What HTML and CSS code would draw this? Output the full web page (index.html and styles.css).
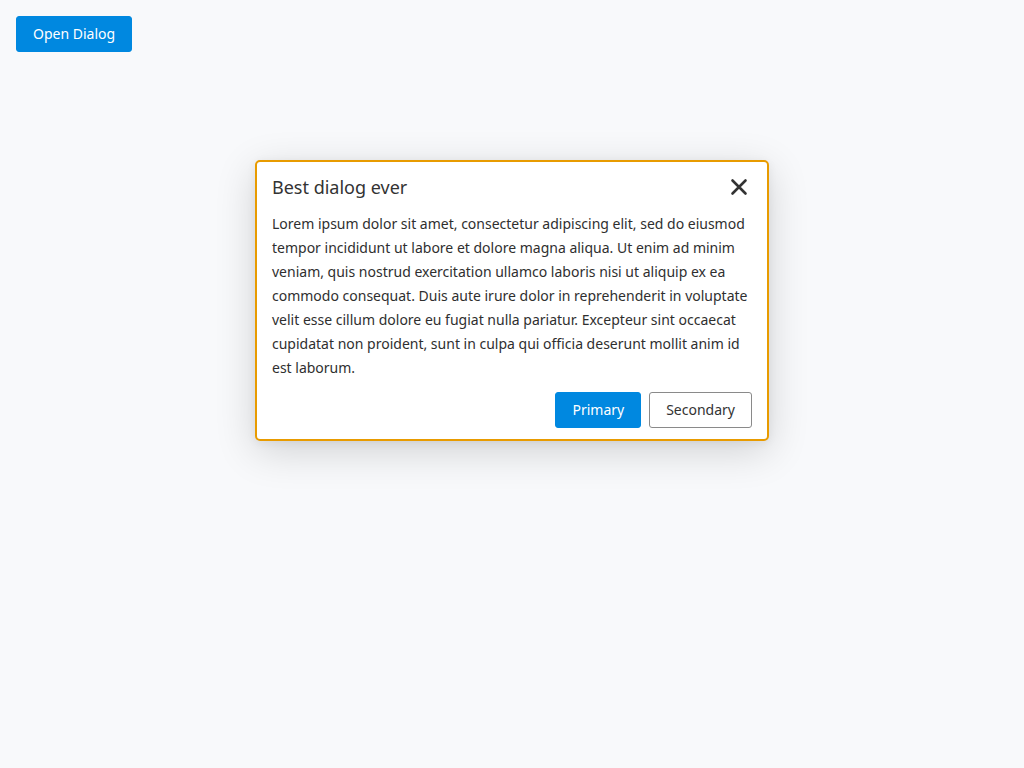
FILE: index.html
```html
<!DOCTYPE html>
<html lang="en">
<head>
<meta charset="utf-8">
<title>Dialog</title>
<link rel="stylesheet" href="styles.css">
</head>
<body>
<main class="page">
  <button class="btn btn-primary open-btn" type="button">Open Dialog</button>
  <div class="overlay">
    <section class="dialog" role="dialog" aria-labelledby="dlg-title">
      <header class="dialog-header">
        <h2 id="dlg-title" class="dialog-title">Best dialog ever</h2>
        <button class="close-btn" type="button" aria-label="Close">
          <svg width="18" height="18" viewBox="0 0 18 18" aria-hidden="true">
            <path d="M2.5 2.5 L15.5 15.5 M15.5 2.5 L2.5 15.5" stroke="#333" stroke-width="2.6" stroke-linecap="round" fill="none"/>
          </svg>
        </button>
      </header>
      <p class="dialog-body">Lorem ipsum dolor sit amet, consectetur adipiscing elit, sed do eiusmod tempor incididunt ut labore et dolore magna aliqua. Ut enim ad minim veniam, quis nostrud exercitation ullamco laboris nisi ut aliquip ex ea commodo consequat. Duis aute irure dolor in reprehenderit in voluptate velit esse cillum dolore eu fugiat nulla pariatur. Excepteur sint occaecat cupidatat non proident, sunt in culpa qui officia deserunt mollit anim id est laborum.</p>
      <footer class="dialog-footer">
        <button class="btn btn-primary" type="button">Primary</button>
        <button class="btn btn-secondary" type="button">Secondary</button>
      </footer>
    </section>
  </div>
</main>
</body>
</html>
```

FILE: styles.css
```css
* { box-sizing: border-box; }

html, body {
  margin: 0;
  padding: 0;
  height: 100%;
}

body {
  background: #f8f9fb;
  font-family: "Noto Sans", "Open Sans", sans-serif;
  color: #2b2b2b;
}

.page {
  padding: 16px;
  min-height: 100%;
  position: relative;
}

.btn {
  font-family: inherit;
  font-size: 14px;
  line-height: 20px;
  height: 36px;
  padding: 7px 16px;
  border-radius: 3px;
  white-space: nowrap;
  cursor: pointer;
}

.btn-primary {
  background: #0088e0;
  border: 1px solid #0088e0;
  color: #fff;
}

.btn-secondary {
  background: #fff;
  border: 1px solid #8a8a8a;
  color: #333;
}

.open-btn {
  display: block;
}

.overlay {
  position: absolute;
  left: 0;
  right: 0;
  top: 160px;
  display: flex;
  justify-content: center;
}

.dialog {
  width: 514px;
  background: #fff;
  border: 2px solid #e89b00;
  border-radius: 5px;
  padding: 15px 15px 11px;
  box-shadow: 0 10px 40px rgba(0, 0, 0, 0.16), 0 2px 10px rgba(0, 0, 0, 0.06);
}

.dialog-header {
  display: flex;
  align-items: center;
  justify-content: space-between;
  height: 20px;
}

.dialog-title {
  margin: 0;
  font-size: 18px;
  font-weight: 400;
  line-height: 20px;
  color: #333;
}

.close-btn {
  background: none;
  border: 0;
  padding: 0;
  width: 26px;
  height: 20px;
  display: flex;
  align-items: center;
  justify-content: center;
  cursor: pointer;
}

.dialog-body {
  margin: 15px 0 12px;
  font-size: 14px;
  line-height: 24px;
  color: #2f2f2f;
}

.dialog-footer {
  display: flex;
  justify-content: flex-end;
  gap: 8px;
}
```
